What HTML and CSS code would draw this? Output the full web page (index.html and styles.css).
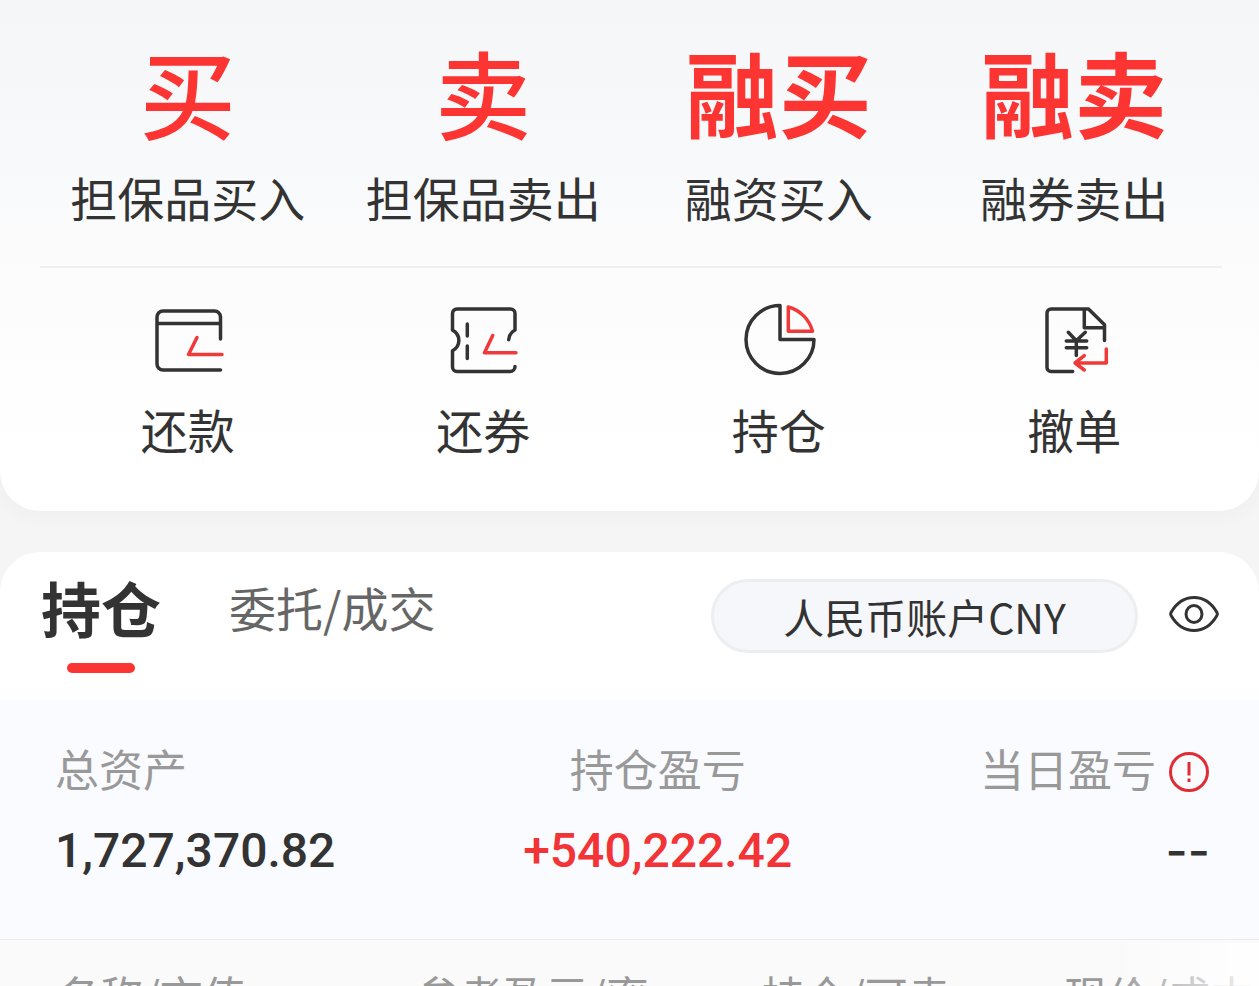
FILE: index.html
```html
<!DOCTYPE html>
<html lang="zh-CN">

<head>
    <meta charset="UTF-8">
    <meta name="viewport" content="width=device-width, initial-scale=1.0">
    <title>融资融券</title>
    <link rel="stylesheet" href="styles.css">
</head>

<body>
    <nav class="actions">
        <div class="action-row main-row">
            <a href="#" class="action"><span class="big">买</span><span class="label">担保品买入</span></a>
            <a href="#" class="action"><span class="big">卖</span><span class="label">担保品卖出</span></a>
            <a href="#" class="action"><span class="big bold">融买</span><span class="label">融资买入</span></a>
            <a href="#" class="action"><span class="big bold">融卖</span><span class="label">融券卖出</span></a>
        </div>
        <div class="action-row icon-row">
            <a href="#" class="action">
                <svg class="icon" viewBox="0 0 80 80" aria-hidden="true">
                    <path d="M72.500 39V17a6 6 0 0 0-6-6H15a6 6 0 0 0-6 6v47a6 6 0 0 0 6 6h57.500M9 23.500h63.500" />
                    <path class="red" d="M49 37.500L40.500 54.500H74" />
                </svg>
                <span class="label">还款</span>
            </a>
            <a href="#" class="action">
                <svg class="icon" viewBox="0 0 80 80" aria-hidden="true">
                    <path d="M65.700 39.700C66 35 68.500 32 72 30V13.500a4.500 4.500 0 0 0-4.500-4.500H14a4.500 4.500 0 0 0-4.500 4.500V30C18 35 18 46 9.500 50.700V67a4.500 4.500 0 0 0 4.500 4.500h53a5 5 0 0 0 5-5" />
                    <path d="M24.300 24v12M24.300 46v12.500" />
                    <path class="red" d="M49.700 35.500L41.500 52.700H73" />
                </svg>
                <span class="label">还券</span>
            </a>
            <a href="#" class="action">
                <svg class="icon" viewBox="0 0 80 80" aria-hidden="true">
                    <path d="M41 39.500V5.500A34 34 0 1 0 75 39.500Z" />
                    <path class="red" d="M49.300 7V31.300H73.500A34 34 0 0 0 49.300 7Z" />
                </svg>
                <span class="label">持仓</span>
            </a>
            <a href="#" class="action">
                <svg class="icon" viewBox="0 0 80 80" aria-hidden="true">
                    <path d="M38.700 71.500H17a4 4 0 0 1-4-4V13a4 4 0 0 1 4-4H54.500L70.500 24.700V40.500M50.300 9V27.700H70.500" />
                    <path d="M34.300 32.300L42.300 40.700L51.300 32.300M42.300 40.700V55.500M32.300 41H52.700M32.300 47.700H52.700" />
                    <path class="red" d="M72.300 49V63H41M50.300 55.700L41 63L50.300 70" />
                </svg>
                <span class="label">撤单</span>
            </a>
        </div>
    </nav>

    <main class="holdings">
        <div class="tabs">
            <button type="button" class="tab active">持仓</button>
            <button type="button" class="tab">委托/成交</button>
            <button type="button" class="account">人民币账户CNY</button>
            <button type="button" class="eye" aria-label="隐藏金额">
                <svg viewBox="0 0 52 40" aria-hidden="true">
                    <path d="M3.200 18.200C8 10 16 3.500 26 3.500S44 10 48.800 18.200Q50 20 48.800 21.800C44 30 36 36.500 26 36.500S8 30 3.200 21.800Q2 20 3.200 18.200Z" />
                    <ellipse cx="26" cy="20" rx="8" ry="8.500" />
                </svg>
            </button>
        </div>

        <section class="summary">
            <div class="item">
                <span class="name">总资产</span>
                <span class="value">1,727,370.82</span>
            </div>
            <div class="item center">
                <span class="name">持仓盈亏</span>
                <span class="value up">+540,222.42</span>
            </div>
            <div class="item right">
                <span class="name">当日盈亏
                    <svg class="alert" viewBox="0 0 42 42" aria-hidden="true">
                        <circle cx="21" cy="21" r="18.500" />
                        <path d="M21 11V24.500M21 27.500V31" />
                    </svg>
                </span>
                <span class="value empty">--</span>
            </div>
        </section>

        <div class="list">
            <table>
                <thead>
                    <tr>
                        <th>名称/市值</th>
                        <th>参考盈亏/率</th>
                        <th>持仓/可卖</th>
                        <th>现价/成本</th>
                    </tr>
                </thead>
            </table>
        </div>
    </main>
</body>

</html>
```
FILE: styles.css
```css
* {
    box-sizing: border-box;
}

body {
    margin: 0;
    height: 100vh;
    overflow: hidden;
    background: #f5f5f5;
    color: #333;
    font-family: "Noto Sans CJK SC", sans-serif;
}

a {
    color: inherit;
    text-decoration: none;
}

button {
    padding: 0;
    border: 0;
    background: none;
    color: inherit;
    font-family: inherit;
    cursor: pointer;
}

/* Trade shortcuts */
.actions {
    padding: 31px 37px 47px 40px;
    border-radius: 0 0 40px 40px;
    background: linear-gradient(#f4f6f8, #f8f9fb 30%, #fcfcfc 56%, #fff 90%);
    box-shadow: 0 4px 24px rgba(0, 0, 0, 0.03);
}

.action-row {
    display: grid;
    grid-template-columns: repeat(4, 1fr);
}

.main-row {
    padding-bottom: 34px;
    border-bottom: 2px solid #efeff0;
}

.icon-row {
    padding-top: 32px;
}

.action {
    display: flex;
    flex-direction: column;
    align-items: center;
}

.big {
    margin-bottom: 11px;
    color: #fc3432;
    font-size: 96px;
    font-weight: 500;
    line-height: 120px;
}

.bold {
    font-size: 93px;
    font-weight: 700;
}

.label {
    font-size: 47px;
    line-height: 70px;
}

.icon {
    width: 80px;
    height: 80px;
    margin-bottom: 14px;
}

svg {
    display: block;
    fill: none;
    stroke: #333;
    stroke-width: 3;
    stroke-linecap: round;
    stroke-linejoin: round;
}

.icon {
    stroke-width: 3.5;
}

.red {
    stroke: #f03a3a;
}

/* Holdings card */
.holdings {
    margin-top: 41px;
    border-radius: 40px 40px 0 0;
    background: #fff;
    overflow: hidden;
}

.tabs {
    display: flex;
    height: 148px;
    padding: 15px 39px 27px 41px;
}

.tab {
    height: 80px;
    margin-right: 68px;
    color: #666;
    font-size: 47px;
    line-height: 80px;
}

.active {
    color: #333;
    font-size: 60px;
    font-weight: 700;
}

.active::after {
    content: "";
    display: block;
    width: 68px;
    height: 10px;
    margin: 16px auto 0;
    border-radius: 5px;
    background: #fc3432;
}

.account {
    width: 427px;
    height: 74px;
    margin: 12px 30px 0 auto;
    border: 3px solid #eceef0;
    border-radius: 37px;
    background: #f6f7fa;
    font-size: 41px;
}

.eye {
    width: 52px;
    height: 40px;
    margin-top: 27px;
}

.summary {
    display: flex;
    justify-content: space-between;
    height: 240px;
    padding: 36px 49px 0 55px;
    border-bottom: 1px solid #ebebee;
    background: #fafbff;
}

.item {
    display: flex;
    flex-direction: column;
}

.center {
    align-items: center;
}

.right {
    align-items: flex-end;
}

.name {
    display: flex;
    align-items: center;
    gap: 12px;
    color: #999;
    font-size: 44px;
    line-height: 64px;
}

.alert {
    width: 42px;
    height: 42px;
    margin-top: 8px;
    stroke: #e02d35;
    stroke-linecap: butt;
}

.value {
    margin-top: 14px;
    font-family: Roboto, sans-serif;
    font-size: 48px;
    font-weight: 500;
    line-height: 74px;
}

.up {
    color: #f23436;
}

.empty {
    font-family: Inter, sans-serif;
}

.list {
    position: relative;
    background: #fafafa;
}

/* Fades the last column to hint at sideways scrolling */
.list::after {
    content: "";
    position: absolute;
    top: 3px;
    right: 0;
    bottom: 0;
    width: 150px;
    background: linear-gradient(to right, rgba(255, 255, 255, 0), rgba(255, 255, 255, 0.9));
}

table {
    width: 100%;
    border-collapse: collapse;
    table-layout: fixed;
}

th {
    width: 24%;
    padding: 22px 6px 22px 0;
    color: #999;
    font-size: 43px;
    font-weight: 400;
    line-height: 64px;
    text-align: right;
    white-space: nowrap;
}

th:first-child {
    width: 28%;
    padding-left: 57px;
    text-align: left;
}
```
